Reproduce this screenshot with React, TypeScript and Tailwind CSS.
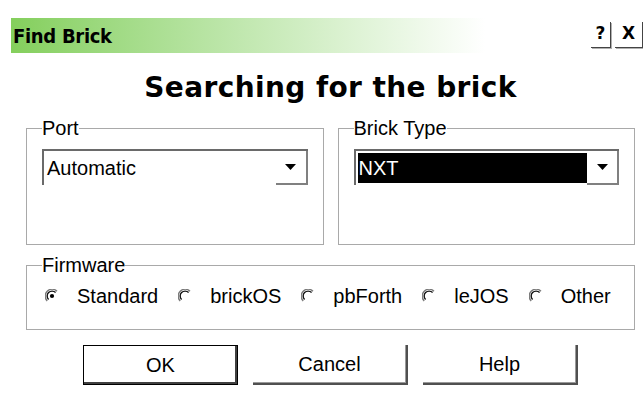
import React from 'react';

const FIRMWARE = ['Standard', 'brickOS', 'pbForth', 'leJOS', 'Other'];

function Arrow() {
  return (
    <svg width="11" height="6" viewBox="0 0 11 6">
      <path d="M0 0 H11 L5.5 6 Z" fill="#000" />
    </svg>
  );
}

function Radio({ checked }: { checked?: boolean }) {
  return (
    <svg width="14" height="14" viewBox="0 0 14 14" className="shrink-0">
      <path d="M12 2.2 A6.4 6.4 0 0 0 2.2 12" stroke="#7a7a7a" strokeWidth="1.4" fill="none" />
      <path d="M10.6 3.6 A4.8 4.8 0 0 0 3.6 10.6" stroke="#111" strokeWidth="1.4" fill="none" />
      {checked && <circle cx="7" cy="7" r="2.1" fill="#000" />}
    </svg>
  );
}

function Combo({ value, selected }: { value: string; selected?: boolean }) {
  return (
    <div className="flex h-[36px] border-t-2 border-l-2 border-[#6a6a6a]">
      <div className="flex-1 p-[2px] pr-0">
        <div
          className={`h-full flex items-center pl-[1px] leading-none ${
            selected ? 'bg-black text-white' : 'bg-white text-black'
          }`}
        >
          {value}
        </div>
      </div>
      <div className="w-[32px] flex items-center justify-center border-r-2 border-b-2 border-[#808080]">
        <Arrow />
      </div>
    </div>
  );
}

function Group({
  label,
  className,
  children,
}: {
  label: string;
  className?: string;
  children: React.ReactNode;
}) {
  return (
    <fieldset className={`border border-[#a9a9a9] px-[15px] ${className ?? ''}`}>
      <legend className="leading-[22px] px-0">{label}</legend>
      {children}
    </fieldset>
  );
}

function Button({ label, isDefault }: { label: string; isDefault?: boolean }) {
  return (
    <button
      className={`w-[155px] h-[40px] flex items-center justify-center leading-none ${
        isDefault
          ? 'border border-black shadow-[inset_-2px_-2px_0_#404040]'
          : 'border-r-2 border-b-2 border-[#505050] shadow-[inset_-1px_-1px_0_#9a9a9a]'
      }`}
    >
      {label}
    </button>
  );
}

export default function App() {
  return (
    <div className="w-[643px] h-[403px] overflow-hidden bg-white text-black text-[20px] font-['Liberation_Sans',Arial,sans-serif]">
      {/* caption bar */}
      <div className="pt-[18px] pl-[11px]">
        <div className="h-[35px] flex items-center pl-[2px] bg-linear-to-r from-[#84cf5c] to-white to-75%">
          <span className="font-['DejaVu_Sans_Condensed','DejaVu_Sans',sans-serif] font-bold text-[20px] tracking-[-0.3px]">
            Find Brick
          </span>
          <div className="ml-auto flex gap-[4px] self-start mt-[4px] font-['DejaVu_Sans',sans-serif] font-bold text-[17px]">
            <div className="w-[20px] h-[26px] flex items-end justify-center pb-[1px] border-r border-b border-[#444] shadow-[1px_1px_0_#b0b0b0]">
              ?
            </div>
            <div className="w-[28px] h-[26px] flex items-end justify-center pb-[1px] border-r border-b border-[#444] shadow-[1px_1px_0_#b0b0b0]">
              X
            </div>
          </div>
        </div>
      </div>

      <div className="pl-[26px] pr-[8px]">
        <h1 className="mt-[18px] text-center font-['DejaVu_Sans',sans-serif] font-bold text-[28px] leading-[34px] tracking-[0.4px]">
          Searching for the brick
        </h1>

        <div className="mt-[12px] flex gap-[14px]">
          <Group label="Port" className="flex-1 pt-[10px] pb-[59px]">
            <Combo value="Automatic" />
          </Group>
          <Group label="Brick Type" className="flex-1 pt-[10px] pb-[59px]">
            <Combo value="NXT" selected />
          </Group>
        </div>

        <Group label="Firmware" className="mt-[9px] pt-[8px] pb-[21px]">
          <div className="flex items-center gap-[20px] pl-[3px] leading-[24px]">
            {FIRMWARE.map((f, i) => (
              <label key={f} className="flex items-center gap-[18px]">
                <Radio checked={i === 0} />
                {f}
              </label>
            ))}
          </div>
        </Group>

        <div className="mt-[15px] flex justify-center gap-[15px]">
          <Button label="OK" isDefault />
          <Button label="Cancel" />
          <Button label="Help" />
        </div>
      </div>
    </div>
  );
}
